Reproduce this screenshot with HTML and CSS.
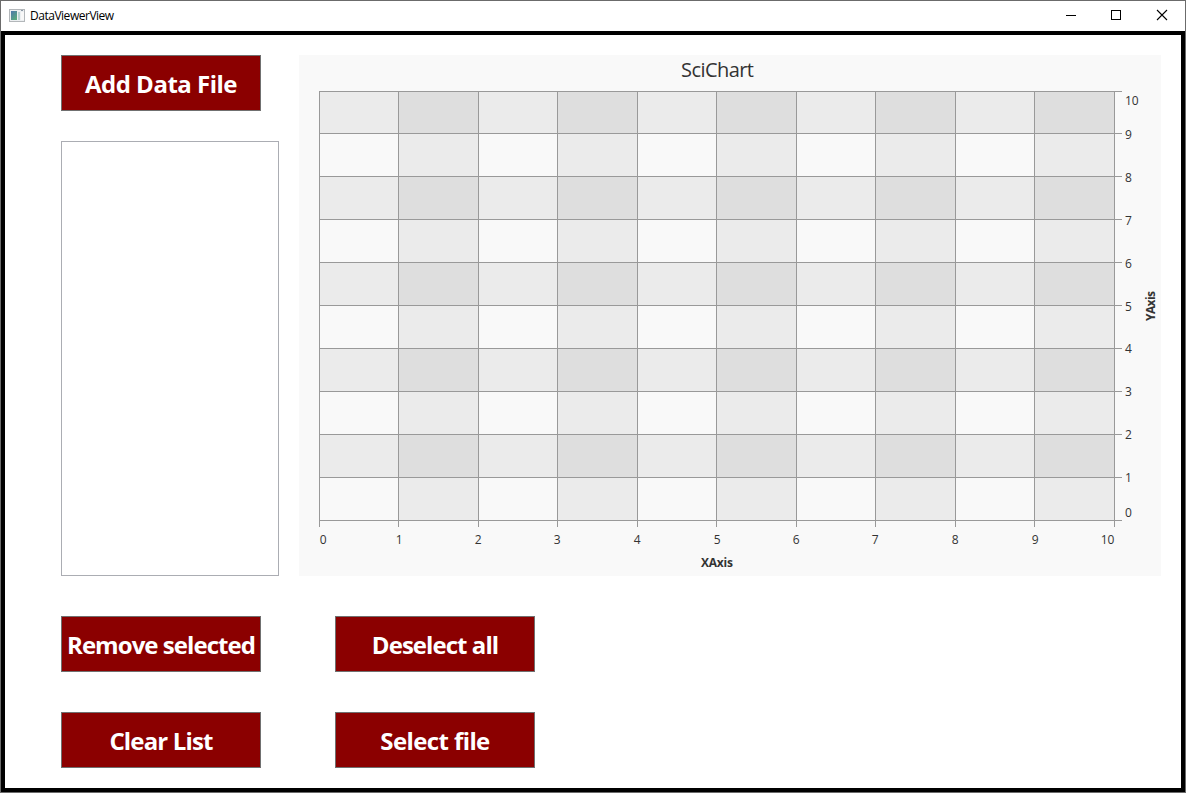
FILE: index.html
```html
<!DOCTYPE html>
<html lang="en">
<head>
<meta charset="utf-8">
<title>DataViewerView</title>
<link rel="stylesheet" href="styles.css">
</head>
<body>
<div class="window">
  <header class="titlebar">
    <svg class="app-icon" width="16" height="13" viewBox="0 0 16 13">
      <defs><linearGradient id="pane" x1="0" y1="0" x2="0.7" y2="1"><stop offset="0" stop-color="#4d77ad"/><stop offset="1" stop-color="#58a97c"/></linearGradient></defs>
      <rect x="0.5" y="0.5" width="15" height="12" fill="#eceff1" stroke="#b3b7ba"/>
      <rect x="2" y="2" width="6" height="9" fill="url(#pane)"/>
      <rect x="9" y="3" width="2" height="8" fill="#b9d2d2"/>
      <rect x="12" y="3" width="3" height="8" fill="#f8f8f8"/>
      <path d="M12 1.5h2" stroke="#8b98a5"/>
    </svg>
    <span class="title">DataViewerView</span>
    <div class="controls">
      <svg width="46" height="30" viewBox="0 0 46 30"><path d="M19 14.5h10" stroke="#000"/></svg>
      <svg width="46" height="30" viewBox="0 0 46 30"><rect x="18.5" y="9.5" width="9" height="9" fill="none" stroke="#000"/></svg>
      <svg width="46" height="30" viewBox="0 0 46 30"><path d="M18 9l10 10M28 9L18 19" stroke="#000" stroke-width="1.1"/></svg>
    </div>
  </header>
  <main class="content">
    <div class="viewer">
      <div class="sidebar">
        <button class="btn"><span class="t-add">Add Data File</span></button>
        <div class="file-list"></div>
      </div>
      <svg class="chart" width="862" height="521" viewBox="0 0 862 521">
        <text class="chart-title" x="382" y="22" textLength="73">SciChart</text>
        <g transform="translate(20 36)">
          <path class="band" d="M79 0h80v429h-80zM238 0h80v429h-80zM397 0h80v429h-80zM556 0h80v429h-80zM715 0h80v429h-80z"/>
          <path class="band" d="M0 0h795v42H0zM0 85h795v43H0zM0 171h795v43H0zM0 257h795v43H0zM0 343h795v43H0z"/>
          <path class="grid" d="M.5 0v436M79.5 0v436M159.5 0v436M238.5 0v436M318.5 0v436M397.5 0v436M477.5 0v436M556.5 0v436M636.5 0v436M715.5 0v436M795.5 0v436"/>
          <path class="grid" d="M0 .5h803M0 42.5h803M0 85.5h803M0 128.5h803M0 171.5h803M0 214.5h803M0 257.5h803M0 300.5h803M0 343.5h803M0 386.5h803M0 429.5h803"/>
          <g class="tick x-tick">
            <text x="4" y="453">0</text><text x="80" y="453">1</text><text x="159" y="453">2</text><text x="238" y="453">3</text><text x="318" y="453">4</text><text x="398" y="453">5</text><text x="477" y="453">6</text><text x="556" y="453">7</text><text x="636" y="453">8</text><text x="716" y="453">9</text><text x="788.5" y="453">10</text>
          </g>
          <g class="tick">
            <text x="806" y="14">10</text><text x="806" y="48">9</text><text x="806" y="91">8</text><text x="806" y="134">7</text><text x="806" y="177">6</text><text x="806" y="220">5</text><text x="806" y="262">4</text><text x="806" y="305">3</text><text x="806" y="348">2</text><text x="806" y="391">1</text><text x="806" y="426">0</text>
          </g>
        </g>
        <text class="axis-title" x="402" y="512" textLength="32">XAxis</text>
        <text class="axis-title" transform="translate(856 266) rotate(-90)" textLength="30">YAxis</text>
      </svg>
    </div>
    <div class="actions">
      <button class="btn"><span class="t-remove">Remove selected</span></button>
      <button class="btn"><span class="t-deselect">Deselect all</span></button>
      <button class="btn"><span class="t-clear">Clear List</span></button>
      <button class="btn"><span class="t-select">Select file</span></button>
    </div>
  </main>
</div>
</body>
</html>
```
FILE: styles.css
```css
* { box-sizing: border-box; }
body { margin: 0; font-family: "Open Sans", "Noto Sans", sans-serif; background: #fff; }
.window { width: 1186px; height: 793px; border: 1px solid #6b6b6b; display: flex; flex-direction: column; overflow: hidden; }
.titlebar { height: 30px; display: flex; align-items: center; padding-left: 8px; flex: none; }
.app-icon { margin-bottom: 1px; }
.title { font-size: 12px; line-height: 16px; margin-left: 5px; color: #000; letter-spacing: -0.48px; }
.controls { margin-left: auto; display: flex; }
.content { flex: 1; border: 4px solid #000; padding: 20px 20px 20px 56px; }
.viewer { display: flex; gap: 20px; }
.sidebar { width: 218px; height: 521px; display: flex; flex-direction: column; gap: 30px; }
.file-list { flex: 1; border: 1px solid #abadb3; }
.btn { width: 200px; height: 56px; flex: none; background: #8b0000; border: 1px solid #707070; color: #fff; font: 700 24px/32px "Open Sans", "Noto Sans", sans-serif; padding: 2px 0 0; white-space: nowrap; display: flex; align-items: center; justify-content: center; }
.t-add { letter-spacing: -0.5px; }
.t-remove { letter-spacing: -0.95px; }
.t-deselect { letter-spacing: -0.95px; }
.t-clear { letter-spacing: -0.85px; }
.t-select { letter-spacing: -0.6px; }
.actions { margin-top: 40px; display: grid; grid-template-columns: 200px 200px; column-gap: 74px; row-gap: 40px; }
.chart { background: #f9f9f9; flex: none; }
.chart-title { font-size: 20px; fill: #333; }
.band { fill: #000; fill-opacity: 0.054; }
.grid { fill: none; stroke: #999; stroke-width: 1; }
.tick { font-size: 12px; fill: #333; letter-spacing: -0.2px; }
.x-tick { text-anchor: middle; }
.axis-title { font-size: 12px; font-weight: 700; fill: #333; }
```
